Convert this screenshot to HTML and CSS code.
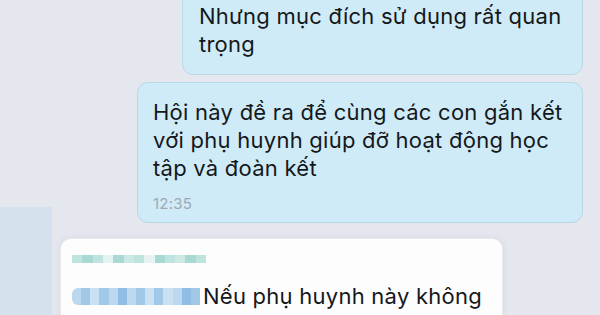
FILE: index.html
```html
<!DOCTYPE html>
<html lang="vi">
<head>
<meta charset="utf-8">
<link rel="stylesheet" href="styles.css">
</head>
<body>
<div class="screen">
  <div class="side">
    <div class="strip"></div>
  </div>
  <div class="chat">
    <div class="bubble out first">
      <p class="msg">Nhưng mục đích sử dụng rất quan<br>trọng</p>
    </div>
    <div class="bubble out second">
      <p class="msg">Hội này đề ra để cùng các con gắn kết<br>với phụ huynh giúp đỡ hoạt động học<br>tập và đoàn kết</p>
      <div class="time">12:35</div>
    </div>
    <div class="bubble in">
      <div class="pix row-name">
        <span class="c a"></span><span class="c b"></span><span class="c a"></span><span class="c w"></span><span class="c b"></span><span class="c d"></span><span class="c a"></span><span class="c w"></span><span class="c b"></span><span class="c a"></span><span class="c d"></span><span class="c b"></span><span class="c a"></span>
      </div>
      <div class="line">
        <div class="pix row-quote">
          <span class="q e"></span><span class="q f"></span><span class="q g"></span><span class="q f"></span><span class="q e"></span><span class="q h"></span><span class="q e"></span><span class="q f"></span><span class="q g"></span><span class="q f"></span><span class="q g"></span><span class="q e"></span><span class="q h"></span><span class="q f"></span>
        </div>
        <span class="msg">Nếu phụ huynh này không</span>
      </div>
    </div>
  </div>
</div>
</body>
</html>
```

FILE: styles.css
```css
* { box-sizing: border-box; margin: 0; padding: 0; }
html, body { width: 600px; height: 315px; overflow: hidden; }
body { background: #e4e7ee; font-family: "Inter", "Noto Sans", sans-serif; color: #15181b; }
.screen { width: 600px; height: 315px; display: grid; grid-template-columns: 52px 1fr; overflow: hidden; background: #e4e7ee; }
.side { display: flex; flex-direction: column; padding-top: 207px; }
.strip { flex: 1; background: #d5e2ee; }
.chat { display: flex; flex-direction: column; align-items: flex-end; padding-right: 17px; }
.bubble { border-radius: 11px; }
.out { background: #cfebf8; border: 1px solid #b8d8e8; }
.msg { font-size: 22px; line-height: 28px; letter-spacing: 0.25px; white-space: nowrap; }
.first { width: 401px; margin-top: -12px; padding: 13px 10px 16px 16px; }
.second { width: 446px; margin-top: 7px; padding: 15px 10px 9px 15px; }
.time { font-size: 15px; line-height: 18px; color: #9ea8b1; margin-top: 13px; letter-spacing: 0.2px; }
.in { align-self: flex-start; margin-left: 8px; margin-top: 15px; width: 443px; height: 100px; background: #fdfdfe; border: 1px solid #e9ebef; box-shadow: 0 0 4px rgba(200,205,215,0.6); padding: 16px 10px 0 11px; }
.pix { display: flex; }
.row-name { height: 8px; width: 134px; }
.c { flex: 1; }
.c.a { background: #bfe3df; }
.c.b { background: #a9d9d3; }
.c.d { background: #cde9e6; }
.c.w { background: #e6f3f2; }
.line { display: flex; align-items: center; gap: 3px; margin-top: 19px; }
.row-quote { height: 17px; width: 128px; flex: none; border-radius: 6px 0 0 6px; overflow: hidden; }
.q { flex: 1; }
.q.e { background: #bcd8ee; }
.q.f { background: #a2c8e7; }
.q.g { background: #c9e1f3; }
.q.h { background: #8fbde3; }
```
